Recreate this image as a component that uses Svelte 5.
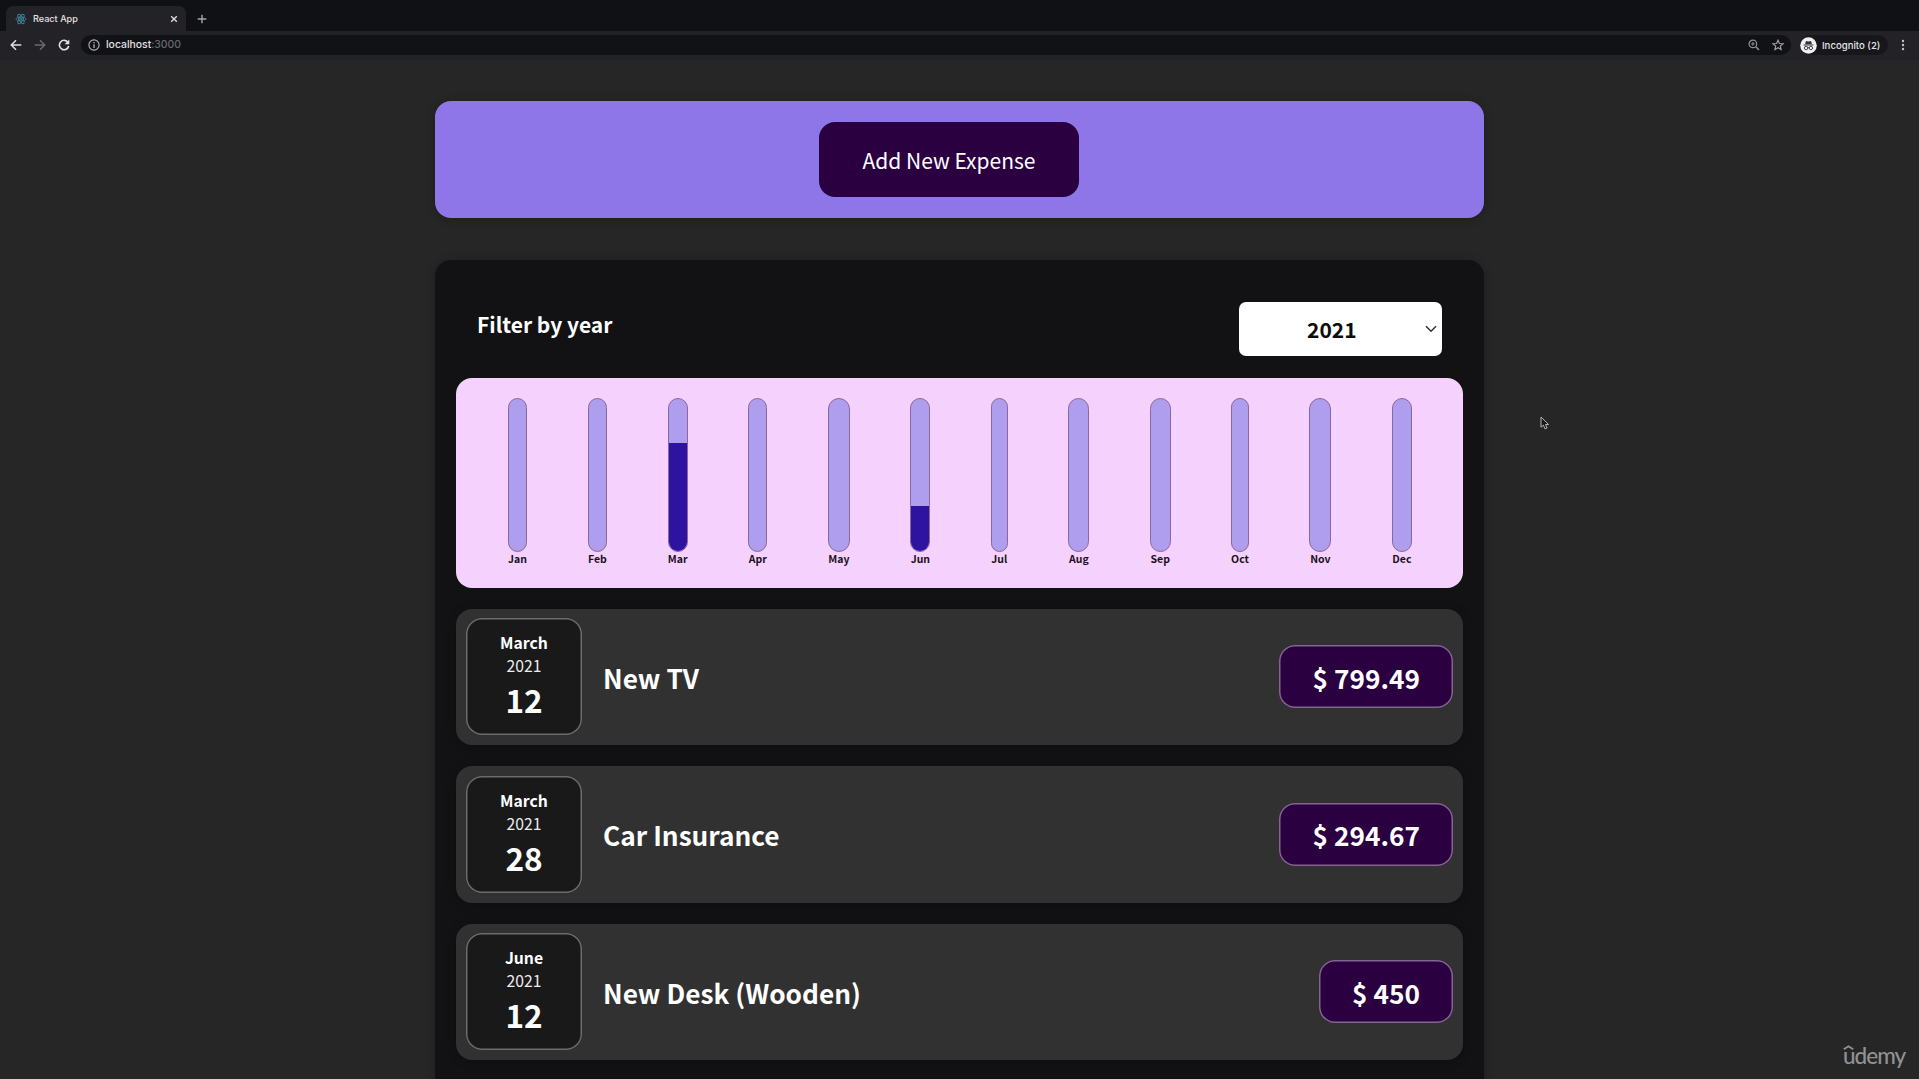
<script>
  const months = [
    { label: 'Jan', width: 19.5, fill: 0 },
    { label: 'Feb', width: 19.5, fill: 0 },
    { label: 'Mar', width: 20.1, fill: 71 },
    { label: 'Apr', width: 19, fill: 0 },
    { label: 'May', width: 22.3, fill: 0 },
    { label: 'Jun', width: 19.8, fill: 29.5 },
    { label: 'Jul', width: 17.2, fill: 0 },
    { label: 'Aug', width: 21, fill: 0 },
    { label: 'Sep', width: 20.7, fill: 0 },
    { label: 'Oct', width: 18, fill: 0 },
    { label: 'Nov', width: 21.7, fill: 0 },
    { label: 'Dec', width: 20.5, fill: 0 }
  ];

  const expenses = [
    { month: 'March', year: 2021, day: 12, title: 'New TV', amount: '799.49' },
    { month: 'March', year: 2021, day: 28, title: 'Car Insurance', amount: '294.67' },
    { month: 'June', year: 2021, day: 12, title: 'New Desk (Wooden)', amount: '450' }
  ];
</script>

<div class="window">
  <header class="chrome">
    <div class="tabs">
      <div class="tab">
        <svg class="logo" viewBox="0 0 12 12" width="12" height="12">
          <g fill="none" stroke="#3b8296" stroke-width="0.9">
            <ellipse cx="6" cy="6" rx="5.2" ry="2" />
            <ellipse cx="6" cy="6" rx="5.2" ry="2" transform="rotate(60 6 6)" />
            <ellipse cx="6" cy="6" rx="5.2" ry="2" transform="rotate(120 6 6)" />
          </g>
          <circle cx="6" cy="6" r="1.1" fill="#3b8296" />
        </svg>
        <span class="tab-title">React App</span>
        <svg class="close" viewBox="0 0 8 8" width="8" height="8">
          <path d="M1.2 1.2 6.8 6.8M6.8 1.2 1.2 6.8" stroke="#dcdcde" stroke-width="1.4" />
        </svg>
      </div>
      <svg class="plus" viewBox="0 0 10 10" width="10" height="10">
        <path d="M5 .7V9.3M.7 5H9.3" stroke="#a5a6a9" stroke-width="1.4" />
      </svg>
    </div>
    <div class="toolbar">
      <svg class="back" viewBox="0 0 12 12" width="12" height="12">
        <path d="M11.3 6H1.5M6 1.3 1.3 6 6 10.7" fill="none" stroke="#e2e2e4" stroke-width="1.5" />
      </svg>
      <svg class="forward" viewBox="0 0 12 12" width="12" height="12">
        <path d="M.7 6H10.5M6 1.3 10.7 6 6 10.7" fill="none" stroke="#6c6c70" stroke-width="1.4" />
      </svg>
      <svg class="reload" viewBox="0 0 12 12" width="12" height="12">
        <path d="M10 3.4A4.7 4.7 0 1 0 10.7 7" fill="none" stroke="#e2e2e4" stroke-width="1.6" />
        <path d="M11.3.6V5.3H6.6Z" fill="#e2e2e4" />
      </svg>
      <div class="address">
        <svg viewBox="0 0 12 12" width="12" height="12">
          <circle cx="6" cy="6" r="5.1" fill="none" stroke="#b4b5b8" stroke-width="1.1" />
          <path d="M6 5.2V9M6 2.9V4.2" stroke="#b4b5b8" stroke-width="1.3" />
        </svg>
        <span class="url">localhost<span class="port">:3000</span></span>
        <svg class="zoom" viewBox="0 0 12 12" width="12" height="12">
          <circle cx="4.9" cy="4.9" r="3.8" fill="none" stroke="#909195" stroke-width="1.2" />
          <path d="M7.8 7.8 11 11" stroke="#909195" stroke-width="1.5" />
          <path d="M3.1 4.9H6.7M4.9 3.1V6.7" stroke="#909195" stroke-width="1" />
        </svg>
        <svg class="star" viewBox="0 0 12 12" width="12" height="12">
          <path d="M6 1.2 7.4 4.5 11 4.8 8.3 7.1 9.1 10.6 6 8.7 2.9 10.6 3.7 7.1 1 4.8 4.6 4.5Z" fill="none" stroke="#a6a7aa" stroke-width="1.1" />
        </svg>
      </div>
      <div class="profile">
        <svg viewBox="0 0 17 17" width="17" height="17">
          <circle cx="8.5" cy="8.5" r="8.3" fill="#f0f0f2" />
          <path d="M6 3.9 8.5 4.4 11 3.9 12 7.3H5Z" fill="#33343a" />
          <path d="M3.6 8H13.4" stroke="#33343a" stroke-width="1" />
          <circle cx="6.1" cy="11" r="1.7" fill="none" stroke="#33343a" stroke-width=".9" />
          <circle cx="10.9" cy="11" r="1.7" fill="none" stroke="#33343a" stroke-width=".9" />
          <path d="M7.7 10.7H9.3" stroke="#33343a" stroke-width=".9" />
        </svg>
        <span>Incognito (2)</span>
      </div>
      <svg class="menu" viewBox="0 0 4 12" width="4" height="12">
        <g fill="#c4c4c7">
          <circle cx="2" cy="2" r="1.2" /><circle cx="2" cy="6" r="1.2" /><circle cx="2" cy="10" r="1.2" />
        </g>
      </svg>
    </div>
  </header>

  <main>
    <section class="new-expense">
      <button type="button">Add New Expense</button>
    </section>

    <section class="expenses">
      <div class="filter">
        <span class="filter-label">Filter by year</span>
        <div class="select">
          <span>2021</span>
          <svg viewBox="0 0 12 8" width="12" height="8">
            <path d="M1 1.3 6 6.2 11 1.3" fill="none" stroke="#333" stroke-width="1.5" />
          </svg>
        </div>
      </div>

      <div class="chart">
        {#each months as m}
          <div class="month" style="width: {m.width}px">
            <div class="bar"><div class="fill" style="height: {m.fill}%"></div></div>
            <span>{m.label}</span>
          </div>
        {/each}
      </div>

      <ul>
        {#each expenses as e}
          <li>
            <div class="date">
              <span class="date-month">{e.month}</span>
              <span class="date-year">{e.year}</span>
              <span class="date-day">{e.day}</span>
            </div>
            <h2>{e.title}</h2>
            <div class="price">$ {e.amount}</div>
          </li>
        {/each}
      </ul>
    </section>
  </main>

  <svg class="cursor" viewBox="0 0 10 14" width="10" height="14">
    <path d="M1 1V11.2L3.4 9.2 5 12.9 7 12 5.5 8.5H8.6Z" fill="#1a1a1a" stroke="#b5b5b5" stroke-width="1" />
  </svg>

  <div class="watermark">
    <svg viewBox="0 0 11 5" width="11" height="5">
      <path d="M.8 4.2 5.5 1.3 10.2 4.2" fill="none" stroke="#929292" stroke-width="1.9" />
    </svg>
    <span>udemy</span>
  </div>
</div>

<style>
  :global(body) {
    margin: 0;
    background: #262626;
  }
  .window {
    position: relative;
    height: 1079px;
    overflow: hidden;
    background: #262626;
    font-family: 'Noto Sans CJK JP', sans-serif;
    color: #fff;
    line-height: 1;
  }
  svg {
    display: block;
    flex: none;
  }

  .chrome {
    font-family: Inter, sans-serif;
    height: 60px;
    background: #232227;
  }
  .tabs {
    display: flex;
    align-items: flex-end;
    height: 31px;
    padding-left: 6px;
    background: #101115;
  }
  .tab {
    display: flex;
    align-items: center;
    box-sizing: border-box;
    width: 180px;
    height: 25px;
    padding: 0 8px 0 9px;
    border-radius: 7px 7px 0 0;
    background: #232227;
  }
  .tab-title {
    margin-left: 6px;
    font-size: 9.1px;
    font-weight: 500;
    color: #e4e4e6;
  }
  .close {
    margin-left: auto;
  }
  .plus {
    margin: 0 0 7px 11px;
  }
  .toolbar {
    display: flex;
    align-items: center;
    height: 28px;
    padding-left: 10px;
  }
  .forward {
    margin-left: 12px;
  }
  .reload {
    margin-left: 12px;
  }
  .address {
    display: flex;
    align-items: center;
    box-sizing: border-box;
    width: 1710px;
    height: 20px;
    margin-left: 11px;
    padding: 0 7px;
    border-radius: 10px;
    background: #111216;
  }
  .url {
    margin-left: 6px;
    padding-top: 1px;
    font-size: 10.4px;
    font-weight: 500;
    color: #e2e2e4;
  }
  .port {
    color: #68696d;
  }
  .zoom {
    margin-left: auto;
  }
  .star {
    margin-left: 12px;
  }
  .profile {
    display: flex;
    align-items: center;
    gap: 5px;
    box-sizing: border-box;
    width: 88px;
    height: 20px;
    margin-left: 9px;
    border-radius: 10px;
    background: #17171b;
    font-size: 9.6px;
    font-weight: 500;
    color: #e4e4e6;
    white-space: nowrap;
  }
  .profile span {
    padding-top: 1px;
  }
  .menu {
    margin-left: 13px;
  }

  main {
    display: flex;
    flex-direction: column;
    gap: 42px;
    width: 1049px;
    margin: 0 auto;
    padding-top: 41px;
  }
  .new-expense {
    display: flex;
    justify-content: center;
    box-sizing: border-box;
    height: 117px;
    padding: 21px 21px 21px 0;
    border-radius: 16px;
    background: #8f76e8;
    box-shadow: 0 1px 10px rgba(0, 0, 0, 0.25);
  }
  button {
    width: 260px;
    height: 75px;
    padding: 1px 0 0;
    border: 0;
    border-radius: 16px;
    background: #2a0041;
    color: #fff;
    font: 400 21px/1 'Noto Sans CJK JP', sans-serif;
    white-space: nowrap;
  }
  .expenses {
    box-sizing: border-box;
    height: 900px;
    padding: 42px 21px 0;
    border-radius: 16px;
    background: #121214;
    box-shadow: 0 1px 10px rgba(0, 0, 0, 0.25);
  }
  .filter {
    display: flex;
    justify-content: space-between;
    padding: 0 21px;
    height: 75.5px;
  }
  .filter-label {
    padding-top: 12px;
    font-size: 21px;
    font-weight: 700;
  }
  .select {
    display: flex;
    align-items: center;
    box-sizing: border-box;
    width: 203px;
    height: 54px;
    padding: 0 5px 0 68px;
    border-radius: 7px;
    background: #fff;
    color: #0c0c0c;
    font-size: 21px;
    font-weight: 700;
  }
  .select svg {
    margin-left: auto;
  }
  .chart {
    display: flex;
    justify-content: space-around;
    box-sizing: border-box;
    height: 210px;
    padding: 20.5px 20.5px 0 21.5px;
    border-radius: 16px;
    background: #f5d2fd;
  }
  .month {
    display: flex;
    flex-direction: column;
    align-items: center;
    color: #1b1020;
    font-size: 10.5px;
    font-weight: 700;
  }
  .month span {
    margin-top: 2px;
  }
  .bar {
    display: flex;
    flex-direction: column;
    justify-content: flex-end;
    box-sizing: border-box;
    width: 100%;
    height: 154px;
    border: 1px solid #87699f;
    border-radius: 12px;
    background: #af9eed;
    overflow: hidden;
  }
  .fill {
    background: #2d13a0;
  }
  ul {
    display: flex;
    flex-direction: column;
    gap: 21px;
    margin: 21px 0 0;
    padding: 0;
    list-style: none;
  }
  li {
    display: flex;
    align-items: center;
    box-sizing: border-box;
    height: 136.5px;
    padding: 0 10px;
    border-radius: 16px;
    background: #313131;
    box-shadow: 0 1px 10px rgba(0, 0, 0, 0.25);
  }
  .date {
    display: flex;
    flex-direction: column;
    align-items: center;
    box-sizing: border-box;
    width: 116px;
    height: 117px;
    padding-top: 17px;
    border-radius: 16px;
    background: #191919;
    box-shadow: inset 0 0 0 1.5px #6c6c6c;
  }
  .date-month {
    font-size: 15.75px;
    font-weight: 700;
  }
  .date-year {
    margin-top: 7px;
    font-size: 15.75px;
    color: #ececec;
  }
  .date-day {
    margin-top: 10.5px;
    font-size: 31.5px;
    font-weight: 700;
  }
  h2 {
    flex: 1;
    margin: 2px 0 0 21px;
    font-size: 26.25px;
    font-weight: 700;
  }
  .price {
    box-sizing: border-box;
    height: 63px;
    padding: 19.5px 33px 0 33.5px;
    border-radius: 16px;
    background: #2a0041;
    box-shadow: inset 0 0 0 1.5px #84658f;
    font-size: 26.25px;
    font-weight: 700;
    white-space: nowrap;
  }

  .cursor {
    position: absolute;
    left: 1540px;
    top: 416px;
  }
  .watermark {
    position: absolute;
    left: 1843px;
    top: 1045px;
    color: #929292;
    font: 500 22.5px/1 Lato, sans-serif;
  }
  .watermark span {
    display: block;
    margin-top: -5px;
    letter-spacing: -1px;
  }
</style>
